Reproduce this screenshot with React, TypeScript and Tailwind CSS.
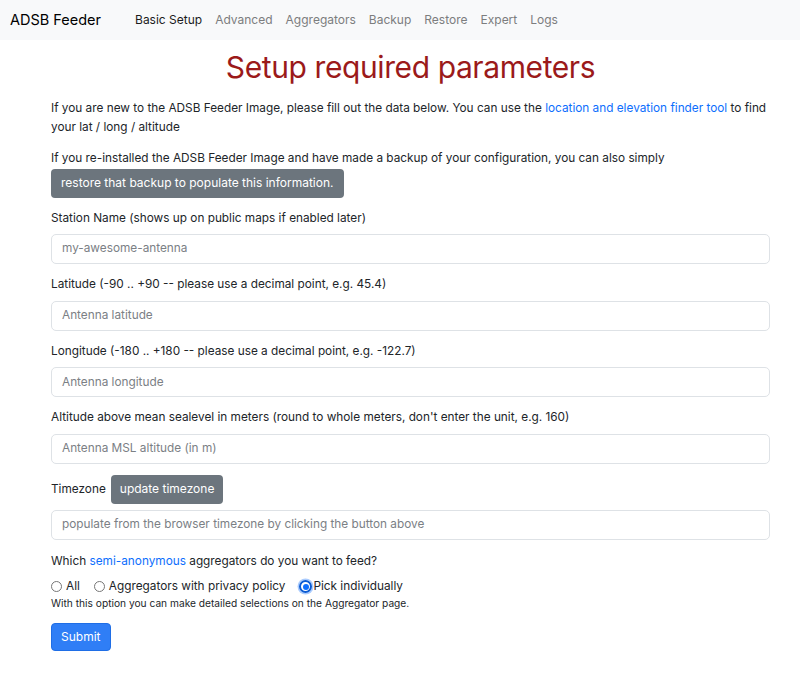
import React from "react";

const font = { fontFamily: "Inter, 'Liberation Sans', sans-serif" };

function Field({ label, placeholder }: { label: string; placeholder: string }) {
  return (
    <div className="mb-[11px]">
      <div className="leading-[19.2px] mb-[6.4px]">{label}</div>
      <div className="h-[30px] border border-[#dee2e6] rounded-[5px] px-[10px] flex items-center text-[#7b8085] bg-white">
        {placeholder}
      </div>
    </div>
  );
}

function Radio({ checked, label }: { checked?: boolean; label: string }) {
  return (
    <label className="flex items-center mr-[14px]">
      {checked ? (
        <span className="w-[13px] h-[13px] rounded-full border-[2px] border-[#0b5bd3] flex items-center justify-center mr-[1px] shadow-[0_0_0_1.5px_rgba(13,110,253,0.35)]">
          <span className="w-[6px] h-[6px] rounded-full bg-[#0d6efd]" />
        </span>
      ) : (
        <span className="w-[11px] h-[11px] rounded-full border border-[#767676] bg-white mr-[4px]" />
      )}
      <span>{label}</span>
    </label>
  );
}

export default function App() {
  return (
    <div className="min-h-[673px] bg-white text-[#212529] text-[11.8px]" style={font}>
      <nav className="h-[40px] bg-[#f8f9fa] flex items-center pl-[10px]">
        <span className="text-[14.5px] text-black mr-[34px]">ADSB Feeder</span>
        <div className="flex gap-[13px] text-[12px] text-[#7c7d7e]">
          <span className="text-[#1c1c1c]">Basic Setup</span>
          <span>Advanced</span>
          <span>Aggregators</span>
          <span>Backup</span>
          <span>Restore</span>
          <span>Expert</span>
          <span>Logs</span>
        </div>
      </nav>
      <div className="ml-[51px] w-[719px]">
        <h1 className="text-center text-[30px] tracking-[-0.4px] leading-[38px] text-[#9b1a1a] mt-[8px] mb-[13px] font-normal">
          Setup required parameters
        </h1>
        <p className="leading-[19.2px] mb-[12px]">
          If you are new to the ADSB Feeder Image, please fill out the data below. You can use the{" "}
          <span className="text-[#0d6efd]">location and elevation finder tool</span> to find your lat / long / altitude
        </p>
        <p className="leading-[19.2px]">
          If you re-installed the ADSB Feeder Image and have made a backup of your configuration, you can also simply
        </p>
        <div className="mb-[11px]">
          <span className="inline-flex items-center h-[29px] px-[10px] bg-[#6c757d] text-white rounded-[4px] text-[12px]">
            restore that backup to populate this information.
          </span>
        </div>
        <Field label="Station Name (shows up on public maps if enabled later)" placeholder="my-awesome-antenna" />
        <Field label="Latitude (-90 .. +90 -- please use a decimal point, e.g. 45.4)" placeholder="Antenna latitude" />
        <Field label="Longitude (-180 .. +180 -- please use a decimal point, e.g. -122.7)" placeholder="Antenna longitude" />
        <Field
          label="Altitude above mean sealevel in meters (round to whole meters, don't enter the unit, e.g. 160)"
          placeholder="Antenna MSL altitude (in m)"
        />
        <div className="mb-[11px]">
          <div className="flex items-center mb-[6px] mt-[2px]">
            <span className="mr-[5px]">Timezone</span>
            <span className="inline-flex items-center h-[29px] px-[9px] bg-[#6c757d] text-white rounded-[4px] text-[12px]">
              update timezone
            </span>
          </div>
          <div className="h-[30px] border border-[#dee2e6] rounded-[5px] px-[10px] flex items-center text-[#7b8085]">
            populate from the browser timezone by clicking the button above
          </div>
        </div>
        <div className="leading-[19.2px] mt-[12px] mb-[6px]">
          Which <span className="text-[#0d6efd]">semi-anonymous</span> aggregators do you want to feed?
        </div>
        <div className="flex items-center leading-[19.2px]">
          <Radio label="All" />
          <Radio label="Aggregators with privacy policy" />
          <Radio checked label="Pick individually" />
        </div>
        <div className="text-[10.2px] leading-[15px] text-[#212529]">
          With this option you can make detailed selections on the Aggregator page.
        </div>
        <div className="mt-[12px]">
          <span className="inline-flex items-center h-[28px] px-[9px] bg-[#2f7ef6] text-white rounded-[4px] border border-[#1f6ee6] text-[12px]">
            Submit
          </span>
        </div>
      </div>
    </div>
  );
}
